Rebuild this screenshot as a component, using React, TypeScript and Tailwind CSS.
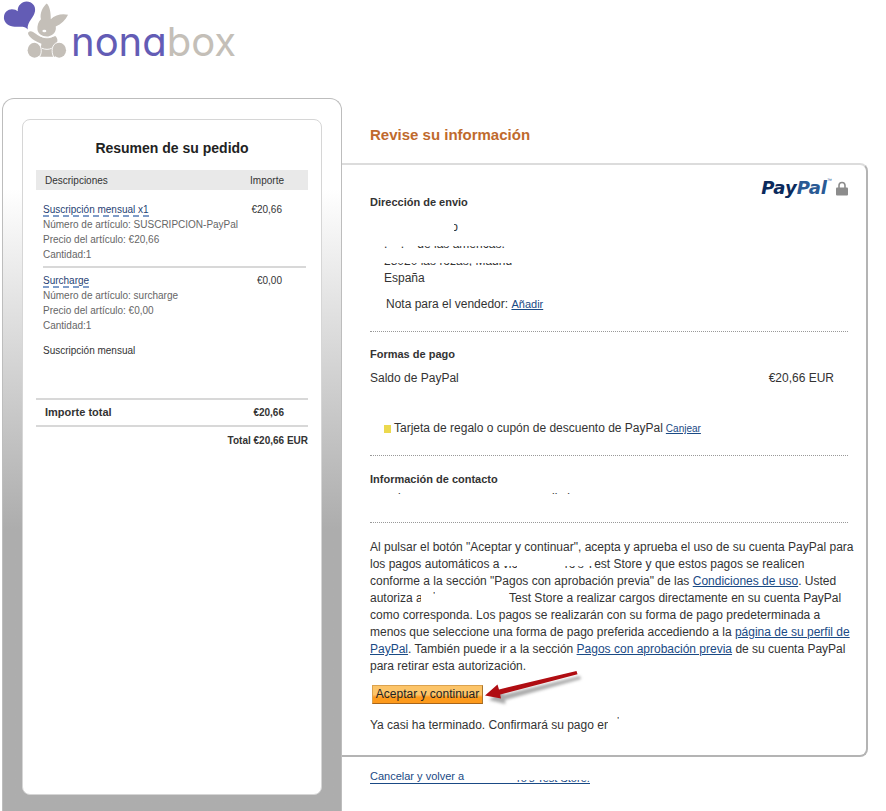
import type { ReactNode } from "react";

const link = "text-[#1a4a85] underline underline-offset-1";

function Bottoms({ children }: { children: ReactNode }) {
  return (
    <span className="inline-flex h-[3px] items-end overflow-hidden leading-[9px] whitespace-pre">
      {children}
    </span>
  );
}

function Logo() {
  return (
    <a href="#" aria-label="nonabox" className="flex h-[62px] items-start text-[#635cb5]">
      <svg viewBox="0 0 72 62" className="h-[62px] w-[71px] shrink-0" aria-hidden="true">
        <path
          fill="#635cb5"
          d="M28 29.500C25 25 19 27.500 13 26.500C7 25.500 3.500 21 4 16.500C4.500 12 8 9 12 9C15 9 16.500 9.800 18 11C17.500 5.500 22 1 27 1C32.500 1 36.500 5.500 35.500 11C34.500 17.500 27.500 21 28 29.500Z"
        />
        <g fill="#c4bfb8">
          <path d="M47.500 3C50.500 6 51.500 12 51.500 19C56 14.500 63 13 69 14.500C66.500 20 62 24 56.500 26.500C57.500 31 54.500 35.500 49 36.500C43 37 38.500 34 38 29.500C37.500 25.500 39 21.500 41.500 19C40 13 43.500 6 47.500 3Z" />
          <path d="M28.500 34C28 31.500 31 30.500 33.500 32C36.500 34 40 37 44 37.500C48 38.500 53 37.500 56 36C58.500 38 59 41.500 57 44L56 57H40L42 44C38 42 31 39.500 28.500 34Z" />
          <ellipse cx="35" cy="50.500" rx="7" ry="7.500" />
          <ellipse cx="60" cy="50.500" rx="7" ry="7.500" />
        </g>
        <path
          d="M36 42.500C42 44 43.500 52 40 57.500M58.500 42.500C52.500 44 51.500 52 54.500 57.500M42.500 48.500C46 50 49.500 50 52.500 48.500M41 36C45 38.500 51 38.500 54 36"
          fill="none"
          stroke="#fff"
          strokeWidth=".9"
        />
        <ellipse cx="45" cy="31" rx="2" ry="1.200" fill="#fff" />
      </svg>
      <span className="font-[Inter,Lato,sans-serif] text-[40px] leading-[84px] [font-feature-settings:'cv11']">
        nona<span className="text-[#c4bfb8]">box</span>
      </span>
    </a>
  );
}

function Item({
  name,
  amount,
  article,
  first,
}: {
  name: string;
  amount: string;
  article: string;
  first?: boolean;
}) {
  const top = first ? "pt-3" : "pt-[5px]";
  return (
    <tr className="align-top">
      <td className={`${top} pb-1 pl-[7px] text-[#666]`}>
        <div className="flex">
          <a
            href="#"
            className="h-[15px] border-b-2 border-dashed border-[#7f9cc8] text-[#1f3f74]"
          >
            {name}
          </a>
        </div>
        <div>Número de artículo: {article}</div>
        <div>Precio del artículo: {amount}</div>
        <div>Cantidad:1</div>
      </td>
      <td className={`${top} pr-[26px] text-right`}>{amount}</td>
    </tr>
  );
}

function Summary() {
  return (
    <aside className="flex w-[340px] shrink-0 flex-col rounded-t-xl border border-b-0 border-[#bdbdbd] bg-linear-to-b from-white from-[90px] to-[#adadad] to-[430px] px-[19px] pt-5 pb-4">
      <section className="grow rounded-lg border border-[#d6d6d6] bg-white px-[13px] pt-[18px]">
        <h2 className="mb-3 text-center text-[14px] leading-5 font-bold text-[#222]">
          Resumen de su pedido
        </h2>
        <table className="w-full border-collapse text-[10px] leading-[15px]">
          <thead>
            <tr className="h-5 bg-[#e9e9e9]">
              <th className="pl-[9px] text-left font-normal">Descripciones</th>
              <th className="pr-6 text-right font-normal">Importe</th>
            </tr>
          </thead>
          <tbody>
            <Item first name="Suscripción mensual x1" amount="€20,66" article="SUSCRIPCION-PayPal" />
            <tr>
              <td colSpan={2} className="pr-[2px] pl-[7px]">
                <hr className="border-t-2 border-[#d8d8d8]" />
              </td>
            </tr>
            <Item name="Surcharge" amount="€0,00" article="surcharge" />
            <tr>
              <td colSpan={2} className="pt-[6px] pb-10 pl-[7px]">
                Suscripción mensual
              </td>
            </tr>
          </tbody>
          <tfoot className="font-bold">
            <tr className="h-[27px] border-y-2 border-[#d8d8d8]">
              <td className="pl-[9px] text-[11px]">Importe total</td>
              <td className="pr-6 text-right">€20,66</td>
            </tr>
            <tr>
              <td colSpan={2} className="pt-[6px] text-right">
                Total €20,66 EUR
              </td>
            </tr>
          </tfoot>
        </table>
      </section>
    </aside>
  );
}

function PayPalMark() {
  return (
    <div className="flex h-6 items-center">
      <span className="font-['DejaVu_Sans','Open_Sans',sans-serif] text-[18px] leading-6 font-bold text-[#0a2a5c] italic">
        Pay<span className="text-[#2a5a94]">Pal</span>
      </span>
      <span className="mr-1 self-start text-[5px] leading-[9px] text-[#2a5a94]">™</span>
      <svg viewBox="0 0 12 15" className="h-[15px] w-3" aria-hidden="true">
        <path d="M3 7V4.500a3 3 0 0 1 6 0V7" fill="none" stroke="#8c8c8c" strokeWidth="1.600" />
        <rect y="6.500" width="12" height="8" rx="1" fill="#8c8c8c" />
      </svg>
    </div>
  );
}

function Dots() {
  return <hr className="border-t border-dotted border-[#999]" />;
}

export default function App() {
  return (
    <div className="min-w-[860px] bg-white font-['Liberation_Sans',Arial,sans-serif] text-[12px] leading-[17px] text-[#333]">
      <header className="h-[98px]">
        <Logo />
      </header>
      <div className="flex pl-[2px]">
        <Summary />
        <main className="min-w-0 grow pr-[18px] pb-[26px]">
          <h1 className="pt-[27px] pb-[18px] pl-7 text-[15px] leading-5 font-bold text-[#bf6a2d]">
            Revise su información
          </h1>
          <div className="rounded-r-lg border-y-2 border-r-2 border-t-[#dcdcdc] border-r-[#b4b4b4] border-b-[#b4b4b4] pr-[18px] pb-[21px] pl-7">
            <section className="pb-[18px]">
              <div className="flex justify-between">
                <h2 className="pt-[29px] text-[11px] font-bold">Dirección de envio</h2>
                <div className="pt-[11px]">
                  <PayPalMark />
                </div>
              </div>
              <address className="pt-2 pl-[14px] not-italic">
                <div className="h-[17px] pl-[70px]">
                  <span className="inline-flex w-1 justify-end overflow-hidden">o</span>
                </div>
                <div className="h-[17px]">
                  <Bottoms>.    .    de las americas.</Bottoms>
                </div>
                <div className="h-[17px]">
                  <Bottoms>28020 las rozas, Madrid</Bottoms>
                </div>
                <div>España</div>
              </address>
              <p className="pt-[9px] pl-4">
                Nota para el vendedor:{" "}
                <a href="#" className={`text-[11px] ${link}`}>
                  Añadir
                </a>
              </p>
            </section>
            <Dots />
            <section className="pt-[14px] pb-[18px]">
              <h2 className="text-[11px] font-bold">Formas de pago</h2>
              <div className="flex justify-between pt-[7px] pr-[14px]">
                <span>Saldo de PayPal</span>
                <span>€20,66 EUR</span>
              </div>
              <p className="flex items-center pt-[33px] pl-[14px]">
                <span className="mr-[3px] h-2 w-[7px] bg-[#ecd94e]" />
                Tarjeta de regalo o cupón de descuento de PayPal
                <a href="#" className={`ml-[3px] text-[10px] ${link}`}>
                  Canjear
                </a>
              </p>
            </section>
            <Dots />
            <section className="pt-[15px] pb-[28px]">
              <h2 className="text-[11px] font-bold">Información de contacto</h2>
              <div className="flex h-[6px] items-end pl-7">
                <span className="h-px w-[154px] overflow-hidden leading-[9px]">l</span>
                <span className="h-px overflow-hidden leading-[9px] whitespace-pre">ll   l</span>
              </div>
            </section>
            <Dots />
            <p className="-mr-3 pt-4">
              Al pulsar el botón "Aceptar y continuar", acepta y aprueba el uso de su cuenta PayPal
              para
              <br />
              los pagos automáticos a{" "}
              <span className="inline-block w-[62px]">
                <Bottoms>vic</Bottoms>
              </span>
              <Bottoms>ro's T</Bottoms>est Store y que estos pagos se realicen
              <br />
              conforme a la sección "Pagos con aprobación previa" de las{" "}
              <a href="#" className={link}>
                Condiciones de uso
              </a>
              . Usted
              <br />
              autoriza <span className="inline-flex w-[5px] overflow-hidden">a</span>
              <span className="inline-block w-[88px] pl-3">
                <span className="inline-flex h-[2px] overflow-hidden align-[8px] leading-[9px]">'</span>
              </span>
              Test Store a realizar cargos directamente en su cuenta PayPal
              <br />
              como corresponda. Los pagos se realizarán con su forma de pago predeterminada a
              <br />
              menos que seleccione una forma de pago preferida accediendo a la{" "}
              <a href="#" className={link}>
                página de su perfil de
                <br />
                PayPal
              </a>
              . También puede ir a la sección{" "}
              <a href="#" className={link}>
                Pagos con aprobación previa
              </a>{" "}
              de su cuenta PayPal
              <br />
              para retirar esta autorización.
            </p>
            <div className="relative mt-[10px] ml-[2px] w-fit">
              <button
                type="button"
                className="block h-[19px] w-[111px] border border-t-[#dba24e] border-r-[#a8762f] border-b-[#a8651a] border-l-[#dba24e] bg-linear-to-b from-[#fcc468] from-50% to-[#fd9a1c] to-65% text-center leading-[17px] whitespace-nowrap text-[#222]"
              >
                Aceptar y continuar
              </button>
              <svg
                viewBox="0 0 104 44"
                className="pointer-events-none absolute -top-4 left-[110px] h-[44px] w-[104px] overflow-visible"
                aria-hidden="true"
              >
                <path
                  d="M7 31L20 21L21.500 25.500L98 7L99 10L23 31L23.500 35Z"
                  fill="#555"
                  opacity=".5"
                  className="blur-[1.500px]"
                />
                <path d="M3 26.500L15.500 15.500L17 20.500L94.500 2L95.500 5.200L18.200 25.500L19 29.500Z" fill="#b00d12" />
              </svg>
            </div>
            <p className="flex pt-[13px]">
              Ya casi ha terminado. Confirmará su pago e
              <span className="w-1 overflow-hidden">n</span>
              <span className="ml-[9px] h-1 overflow-hidden leading-[9px]">'</span>
            </p>
          </div>
          <a
            href="#"
            className="mt-[14px] ml-7 inline-flex h-[13px] items-end border-b border-[#1a4a85] text-[11px] leading-[13px] text-[#1a4a85]"
          >
            <span className="w-[147px]">Cancelar y volver a</span>
            <Bottoms>ro's Test Store.</Bottoms>
          </a>
        </main>
      </div>
    </div>
  );
}
